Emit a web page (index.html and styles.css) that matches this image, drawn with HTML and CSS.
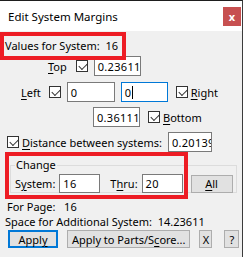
FILE: index.html
```html
<!DOCTYPE html>
<html lang="en">

<head>
    <meta charset="utf-8">
    <title>Edit System Margins</title>
    <link rel="stylesheet" href="styles.css">
</head>

<body>
    <div class="window">
        <div class="titlebar">
            <span class="title">Edit System Margins</span>
            <span class="close">x</span>
        </div>

        <div class="dialog">
            <div class="row values">Values for System:&nbsp; 16</div>

            <div class="row row-top">
                <span class="label"><u>T</u>op</span>
                <span class="check"></span>
                <span class="field">0.23611</span>
            </div>

            <div class="row row-left">
                <span class="label"><u>L</u>eft</span>
                <span class="check"></span>
                <span class="field">0</span>
                <span class="field focused">0<i class="caret"></i></span>
                <span class="check"></span>
                <span class="label"><u>R</u>ight</span>
            </div>

            <div class="row row-bottom">
                <span class="field">0.36111</span>
                <span class="check"></span>
                <span class="label"><u>B</u>ottom</span>
            </div>

            <div class="row row-distance">
                <span class="check"></span>
                <span class="label"><u>D</u>istance between systems:</span>
                <span class="field clipped">0.20139</span>
            </div>

            <fieldset class="group">
                <legend>Change</legend>
                <div class="row row-change">
                    <span class="label">S<u>y</u>stem:</span>
                    <span class="field short">16</span>
                    <span class="label">T<u>h</u>ru:</span>
                    <span class="field short">20</span>
                    <span class="button all"><u>A</u>ll</span>
                </div>
            </fieldset>

            <div class="row info page">For Page:&nbsp;&nbsp; 16</div>
            <div class="row info space">Space for Additional System:&nbsp; 14.23611</div>

            <div class="row row-buttons">
                <span class="button apply">Appl<u>y</u></span>
                <span class="button">Apply to Parts/S<u>c</u>ore...</span>
                <span class="button small">X</span>
                <span class="button small">?</span>
            </div>
        </div>

        <div class="mark mark-values"></div>
        <div class="mark mark-change"></div>
    </div>
</body>

</html>
```

FILE: styles.css
```css
body {
    margin: 0;
    font-family: "Noto Sans", sans-serif;
    font-size: 11px;
    line-height: 15px;
    color: #000;
}

.window {
    position: relative;
    width: 242px;
    height: 256px;
    border-top: 1px solid #1e1e1e;
    border-right: 1px solid #3c3c3c;
    background-color: #f0f0f0;
    overflow: hidden;
}

.titlebar {
    display: flex;
    align-items: center;
    justify-content: space-between;
    height: 30px;
    padding: 0 1px 0 8px;
    background-color: #fff;
}

.title {
    font-size: 11.5px;
}

.close {
    display: flex;
    align-items: center;
    justify-content: center;
    width: 18px;
    height: 19px;
    color: #fff;
    background-color: #c75050;
    font-weight: bold;
    font-size: 11px;
}

.row {
    display: flex;
    align-items: center;
    white-space: nowrap;
}

u {
    text-decoration-thickness: 1px;
    text-underline-offset: 2px;
}

.values {
    height: 16px;
    margin-top: 6px;
    padding-left: 5px;
}

.field {
    display: flex;
    align-items: center;
    box-sizing: border-box;
    width: 47px;
    height: 20px;
    padding-left: 3px;
    border: 1px solid #7a7a7a;
    background-color: #fff;
    letter-spacing: 0.3px;
    overflow: hidden;
}

.field.focused {
    border-color: #0078d7;
}

.caret {
    width: 1px;
    height: 13px;
    margin-left: 1px;
    background-color: #000;
}

.check {
    box-sizing: border-box;
    width: 12px;
    height: 12px;
    border: 1px solid #333;
    background-color: #fff;
    position: relative;
}

.check::after {
    content: "";
    position: absolute;
    left: 1px;
    top: 1px;
    width: 7px;
    height: 4px;
    border-left: 1px solid #333;
    border-bottom: 1px solid #333;
    transform: translate(1px, 1px) rotate(-45deg);
}

.row-top {
    height: 20px;
    margin-top: 3px;
    padding-left: 48px;
}

.row-top .check {
    margin-left: 9px;
}

.row-top .field {
    margin-left: 6px;
}

.row-left {
    height: 20px;
    margin-top: 6px;
    padding-left: 21px;
}

.row-left .check:nth-child(2) {
    margin-left: 8px;
}

.row-left .field:nth-child(3) {
    margin-left: 6px;
    width: 48px;
}

.row-left .field.focused {
    margin-left: 6px;
}

.row-left .check:nth-child(5) {
    margin-left: 8px;
}

.row-left .label:last-child {
    margin-left: 3px;
}

.row-bottom {
    height: 20px;
    margin-top: 5px;
    padding-left: 93px;
}

.row-bottom .check {
    margin-left: 8px;
}

.row-bottom .label {
    margin-left: 3px;
}

.row-distance {
    height: 20px;
    margin-top: 5px;
    padding-left: 7px;
}

.row-distance .label {
    margin-left: 3px;
}

.row-distance .field {
    margin-left: 6px;
    width: 44px;
}

.group {
    box-sizing: border-box;
    width: 227px;
    height: 34px;
    margin: 7px 0 0 10px;
    padding: 0 0 0 4px;
    border: 1px solid #dcdcdc;
}

.group legend {
    padding: 0 1px;
    margin-left: 0;
    line-height: 12px;
}

.row-change {
    height: 19px;
    margin-top: 3px;
}

.field.short {
    width: 41px;
    height: 19px;
    margin-left: 4px;
}

.row-change .label:nth-child(3) {
    margin-left: 10px;
}

.button {
    display: flex;
    align-items: center;
    justify-content: center;
    box-sizing: border-box;
    height: 18px;
    padding: 0 4px;
    border: 1px solid #adadad;
    background-color: #e1e1e1;
}

.button.all {
    width: 42px;
    margin-left: 8px;
}

.info {
    height: 15px;
}

.page {
    margin-top: 6px;
    padding-left: 7px;
}

.space {
    padding-left: 5px;
}

.row-buttons {
    height: 18px;
    margin-top: 1px;
    padding-left: 8px;
    gap: 9px;
}

.button.apply {
    width: 50px;
    border: 2px solid #0078d7;
}

.button.small {
    width: 13px;
    padding: 0;
}

.row-buttons .button.small:last-child {
    width: 15px;
    margin-left: 3px;
}

.mark {
    position: absolute;
    box-sizing: border-box;
    border: 4px solid #ed1c24;
}

.mark-values {
    left: 0;
    top: 31px;
    width: 126px;
    height: 28px;
}

.mark-change {
    left: 5px;
    top: 151px;
    width: 183px;
    height: 47px;
}
```
